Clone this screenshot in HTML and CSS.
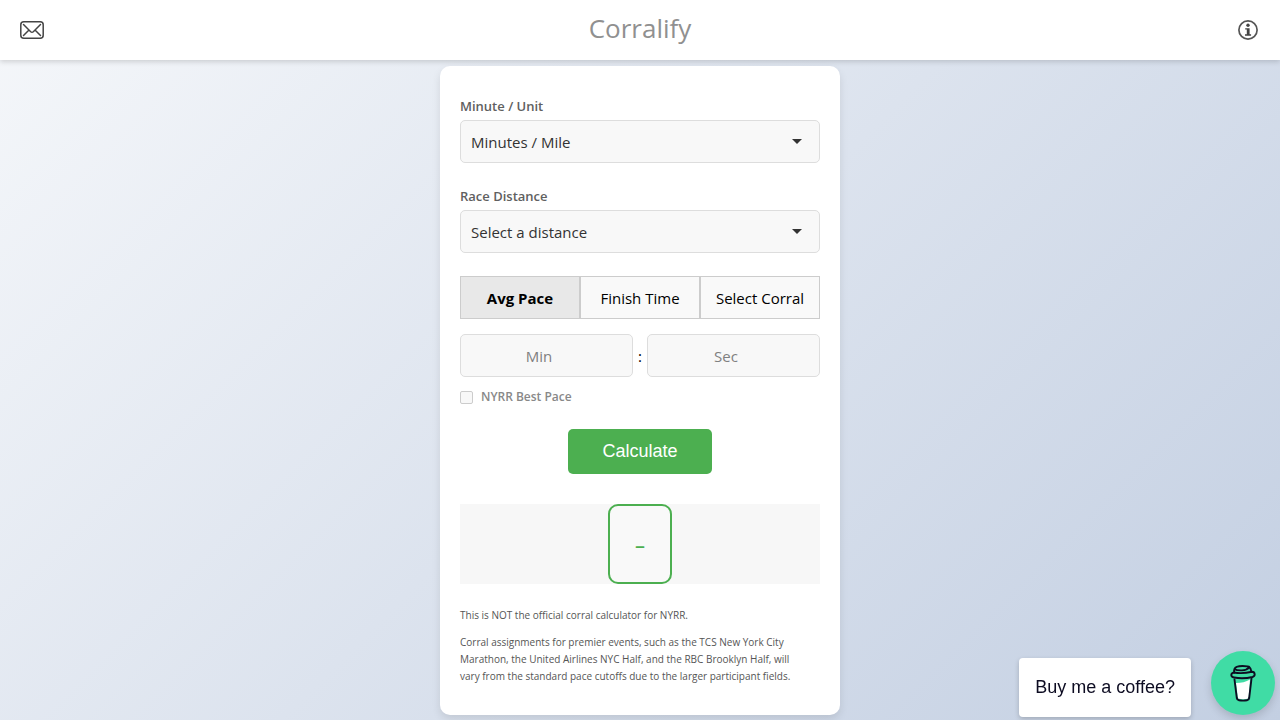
FILE: index.html
```html
<!DOCTYPE html>
<html lang="en">
<head>
    <meta charset="UTF-8">
    <meta name="viewport" content="width=device-width, initial-scale=1.0">
    <title>Corralify</title>
    <link rel="stylesheet" href="styles.css">
</head>
<body>
    <header class="header">
        <a href="#contact" class="header-icon" aria-label="Contact">
            <svg width="24" height="18" viewBox="0 0 24 18" fill="none" stroke="#444" stroke-width="1.5" stroke-linecap="round">
                <rect x="0.8" y="0.8" width="22.4" height="16.4" rx="3"/>
                <path d="M3.5 3.500L10.700 10.700q1.300 1.200 2.600 0L20.500 3.500M3.500 14.500l5-5M20.500 14.500l-5-5"/>
            </svg>
        </a>
        <h1>Corralify</h1>
        <a href="#info" class="header-icon" aria-label="Info">
            <svg width="20" height="20" viewBox="0 0 20 20">
                <circle cx="10" cy="10" r="9.1" fill="none" stroke="#555" stroke-width="1.7"/>
                <circle cx="10" cy="5.3" r="1.7" fill="#444"/>
                <path d="M7.2 8.200h4.400v6h1.500v1.500H7v-1.500h1.800V9.600H7.200z" fill="#444"/>
            </svg>
        </a>
    </header>

    <main class="container">
        <form>
            <div class="form-group">
                <label for="unit">Minute / Unit</label>
                <div class="select-box">
                    <select id="unit">
                        <option>Minutes / Mile</option>
                        <option>Minutes / Kilometer</option>
                    </select>
                </div>
            </div>
            <div class="form-group">
                <label for="distance">Race Distance</label>
                <div class="select-box">
                    <select id="distance">
                        <option>Select a distance</option>
                        <option>5K</option>
                        <option>10K</option>
                        <option>Half Marathon</option>
                        <option>Marathon</option>
                    </select>
                </div>
            </div>

            <div class="tabs">
                <button type="button" class="tab active">Avg Pace</button>
                <button type="button" class="tab">Finish Time</button>
                <button type="button" class="tab">Select Corral</button>
            </div>

            <div class="time-inputs">
                <input type="number" id="minutes" placeholder="Min" aria-label="Minutes">
                <span>:</span>
                <input type="number" id="seconds" placeholder="Sec" aria-label="Seconds">
            </div>

            <div class="best-pace">
                <input type="checkbox" id="bestPace">
                <label for="bestPace">NYRR Best Pace</label>
            </div>

            <button type="submit" class="calculate">Calculate</button>
        </form>

        <div class="result">
            <div class="corral">–</div>
        </div>

        <div class="disclaimer">
            <p>This is NOT the official corral calculator for NYRR.</p>
            <p>Corral assignments for premier events, such as the TCS New York City Marathon, the United Airlines NYC Half, and the RBC Brooklyn Half, will vary from the standard pace cutoffs due to the larger participant fields.</p>
        </div>
    </main>

    <!-- Floating coffee widget -->
    <div class="coffee">
        <div class="coffee-message">Buy me a coffee?</div>
        <button type="button" class="coffee-button" aria-label="Buy me a coffee">
            <svg width="26" height="38" viewBox="0 0 26 38" fill="none" stroke="#0d0c22" stroke-width="1.9" stroke-linecap="round" stroke-linejoin="round">
                <path d="M6 19q8 0 14-3.500L18.500 34.500q-5 1.500-10.500 0z" fill="#fff" stroke="none"/>
                <path d="M4.500 15.500L6.800 34q.3 2 2.200 2.300 4 .6 8 0 1.900-.3 2.200-2.300L21.500 14.500"/>
                <path d="M4 8.500q8 1.500 18-.7 2.500 0 2.700 2.500.1 2-2.200 2.700-9.500 2.200-18.500.5Q1.300 13 1.300 11T4 8.500z"/>
                <path d="M4.200 8.500Q3.800 6.500 4.500 5q1-3 8-3 6 0 7 1.200 1.200 1 1.800 4.200M4.500 5q2 1.600 7.500 1.400 5-.2 7.500-3.200"/>
            </svg>
        </button>
    </div>
</body>
</html>
```
FILE: styles.css
```css
* {
    box-sizing: border-box;
}

body {
    margin: 0;
    min-height: 100vh;
    font-family: "Segoe UI", "Open Sans", "Noto Sans", sans-serif;
    font-size: 15px;
    color: #000;
    background: linear-gradient(135deg, #f5f7fa 0%, #c3cfe2 100%);
}

.header {
    display: flex;
    align-items: center;
    justify-content: space-between;
    height: 60px;
    padding: 0 20px;
    background-color: #fff;
    box-shadow: 0 2px 5px rgba(0, 0, 0, 0.15);
}

.header h1 {
    margin: 0 0 4px;
    font-size: 26px;
    font-weight: 400;
    color: #909090;
}

.header-icon {
    display: flex;
    justify-content: center;
    width: 24px;
}

.container {
    width: 100%;
    max-width: 400px;
    margin: 6px auto 5px;
    padding: 30px 20px;
    background-color: #fff;
    border-radius: 10px;
    box-shadow: 0 4px 8px rgba(0, 0, 0, 0.1);
}

.form-group {
    margin-bottom: 23px;
}

.form-group label {
    display: block;
    margin-bottom: 4px;
    font-size: 13px;
    line-height: 20px;
    font-weight: 600;
    color: #606060;
}

.select-box {
    position: relative;
}

.select-box::after {
    content: "";
    position: absolute;
    top: 19px;
    right: 18px;
    border: 5px solid transparent;
    border-top-color: #333;
    border-bottom: 0;
    pointer-events: none;
}

select,
.time-inputs input {
    width: 100%;
    height: 43px;
    padding: 0 10px;
    font-family: inherit;
    font-size: 15px;
    color: #333;
    background-color: #f8f8f8;
    border: 1px solid #ddd;
    border-radius: 5px;
    appearance: none;
}

.tabs {
    display: flex;
    margin-bottom: 15px;
}

.tab {
    flex: 1;
    height: 43px;
    padding: 0;
    font-family: inherit;
    font-size: 15px;
    color: #000;
    background-color: #f9f9f9;
    border: 1px solid #ccc;
}

.tab.active {
    font-weight: 700;
    background-color: #e8e8e8;
}

.time-inputs {
    display: flex;
    align-items: center;
    gap: 5px;
}

.time-inputs input {
    flex: 1;
    min-width: 0;
    text-align: center;
}

.time-inputs input::placeholder {
    color: #808080;
}

.best-pace {
    display: flex;
    align-items: center;
    gap: 8px;
    margin: 10px 0 22px;
}

.best-pace input {
    width: 13px;
    height: 13px;
    margin: 0;
    background-color: #f8f8f8;
    border: 1px solid #ccc;
    border-radius: 2px;
    appearance: none;
}

.best-pace label {
    font-size: 12px;
    line-height: 20px;
    font-weight: 600;
    color: #888;
}

.calculate {
    display: block;
    width: 144px;
    height: 45px;
    margin: 0 auto 30px;
    font-family: "Liberation Sans", Arial, sans-serif;
    font-size: 18px;
    color: #fff;
    background-color: #4caf50;
    border: none;
    border-radius: 5px;
}

.result {
    display: flex;
    justify-content: center;
    height: 80px;
    background-color: #f7f7f7;
}

.corral {
    display: flex;
    align-items: center;
    justify-content: center;
    width: 64px;
    font-size: 20px;
    font-weight: 600;
    color: #4caf50;
    background-color: #f9f9f9;
    border: 2px solid #4caf50;
    border-radius: 10px;
}

.disclaimer {
    margin-top: 23px;
    padding-right: 10px;
    font-size: 10px;
    line-height: 17px;
    color: #555;
}

.disclaimer p {
    margin: 0 0 10px;
}

.disclaimer p:last-child {
    margin-bottom: 0;
}

.coffee {
    position: fixed;
    right: 5px;
    bottom: 3px;
    display: flex;
    align-items: flex-end;
    gap: 20px;
}

.coffee-message {
    padding: 16px;
    font-family: "Liberation Sans", Arial, sans-serif;
    font-size: 18px;
    line-height: 27px;
    color: #0d0c22;
    background-color: #fff;
    border-radius: 4px;
    box-shadow: 0 2px 5px rgba(0, 0, 0, 0.2);
}

.coffee-button {
    display: flex;
    align-items: center;
    justify-content: center;
    width: 64px;
    height: 64px;
    margin-bottom: 2px;
    padding: 0;
    background-color: #40dca5;
    border: none;
    border-radius: 50%;
    box-shadow: 0 4px 8px rgba(0, 0, 0, 0.15);
}
```
